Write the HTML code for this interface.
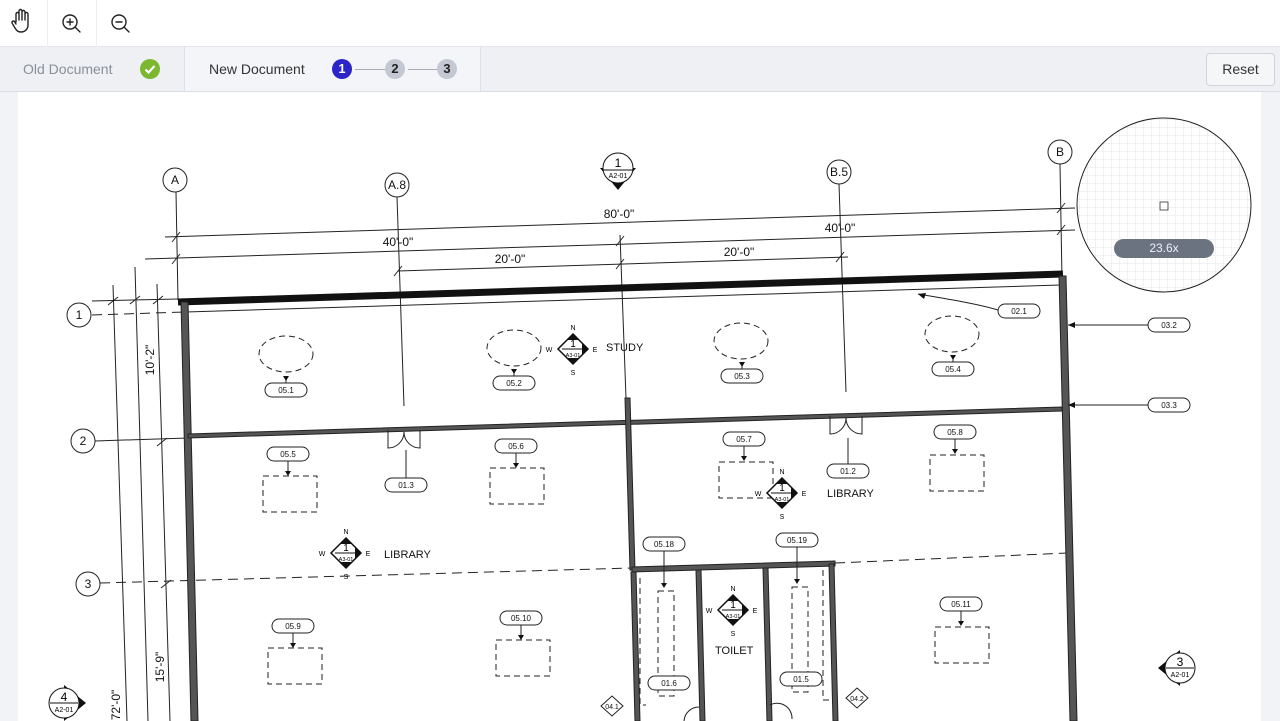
<!DOCTYPE html>
<html><head><meta charset="utf-8"><style>
*{margin:0;padding:0;box-sizing:border-box}
body{width:1280px;height:721px;overflow:hidden;background:#f1f3f6;font-family:"Liberation Sans",sans-serif;position:relative}
.top{position:absolute;left:0;top:0;width:1280px;height:47px;background:#fff;border-bottom:1px solid #e3e5ea}
.sep{position:absolute;top:0;width:1px;height:47px;background:#eceef2}
.tabs{position:absolute;left:0;top:47px;width:1280px;height:45px;background:#eef0f4;border-bottom:1px solid #d9dce2}
.t1{position:absolute;left:0;top:0;width:185px;height:44px;border-right:1px solid #dde0e6;color:#8a8f98;font-size:14px;line-height:44px;padding-left:23px}
.t2{position:absolute;left:185px;top:0;width:296px;height:44px;background:#f4f5f8;border-right:1px solid #dde0e6;color:#333;font-size:14px;line-height:44px;padding-left:24px}
.step{position:absolute;top:12px;width:20px;height:20px;border-radius:50%;font-size:13px;font-weight:bold;line-height:20px;text-align:center}
.reset{position:absolute;left:1206px;top:6px;width:69px;height:33px;border:1px solid #cfd3da;border-radius:4px;background:#f5f6f8;font-size:14px;line-height:31px;text-align:center;color:#333}
.page{position:absolute;left:18px;top:92px;width:1243px;height:629px;background:#fff}
svg text{font-family:"Liberation Sans",sans-serif}
</style></head><body>
<div class="top">
<svg width="140" height="47" style="position:absolute;left:0;top:0" fill="none" stroke="#222" stroke-width="1.4" stroke-linecap="round">
<path d="M16 22 V14 a1.5 1.5 0 0 1 3 0 V20 M19 13 V11 a1.5 1.5 0 0 1 3 0 V20 M22 12 a1.5 1.5 0 0 1 3 0 V20 M25 14 a1.5 1.5 0 0 1 3 0 V25 c0 4 -3 7 -7 7 c-3 0 -4 -1 -6 -4 l-3 -5 a1.5 1.5 0 0 1 2.5 -1.5 L16 24"/>
<circle cx="70" cy="22" r="7"/><path d="M75 27 l5 5 M70 19 v6 M67 22 h6"/>
<circle cx="119" cy="22" r="7"/><path d="M124 27 l5 5 M116 22 h6"/>
</svg>
<div class="sep" style="left:47px"></div><div class="sep" style="left:96px"></div>
</div>
<div class="tabs">
<div class="t1">Old Document<svg width="20" height="20" style="position:absolute;left:140px;top:12px;display:block"><circle cx="10" cy="10" r="10" fill="#7cb82f"/><path d="M5.5 10.5 l3 3 l6-6.5" stroke="#fff" stroke-width="2.2" fill="none"/></svg></div>
<div class="t2">New Document
<div class="step" style="left:147px;background:#2b24c9;color:#fff">1</div>
<div style="position:absolute;left:170px;top:22px;width:30px;height:1px;background:#aab"></div>
<div class="step" style="left:200px;background:#c3c8d2;color:#222">2</div>
<div style="position:absolute;left:223px;top:22px;width:30px;height:1px;background:#aab"></div>
<div class="step" style="left:252px;background:#c3c8d2;color:#222">3</div>
</div>
<div class="reset">Reset</div>
</div>
<div class="page"></div>
<svg width="1280" height="721" style="position:absolute;left:0;top:0" font-size="11">
<defs>
<pattern id="g" width="8" height="8" patternUnits="userSpaceOnUse"><path d="M8 0V8H0" fill="none" stroke="#e2e4e8" stroke-width="1"/></pattern>
<g id="cmp"><polygon points="0,-15 15,0 0,15 -15,0" fill="#fff" stroke="#111" stroke-width="1.5"/><polygon points="-6,-9 0,-15 6,-9" fill="#111"/><polygon points="-6,9 0,15 6,9" fill="#111"/><polygon points="9,-6 15,0 9,6" fill="#111"/><line x1="-11" y1="0" x2="11" y2="0" stroke="#111"/><text x="0" y="-2" font-size="10" text-anchor="middle">1</text><text x="0" y="8" font-size="5.5" text-anchor="middle">A3-01</text><text x="0" y="-19" font-size="7" text-anchor="middle">N</text><text x="0" y="26" font-size="7" text-anchor="middle">S</text><text x="-24" y="3" font-size="7" text-anchor="middle">W</text><text x="22" y="3" font-size="7" text-anchor="middle">E</text></g>
</defs>
<g stroke="#222" stroke-width="1" fill="none">
<line x1="176" y1="192" x2="178" y2="300"/><line x1="397" y1="197" x2="404" y2="406"/><line x1="839" y1="184" x2="846" y2="392"/><line x1="1060" y1="164" x2="1062" y2="280"/><line x1="620" y1="235" x2="626" y2="398"/>
<line x1="165" y1="237" x2="1075" y2="208"/><line x1="145" y1="259" x2="1075" y2="230"/><line x1="398" y1="271" x2="848" y2="257"/>
<path d="M172 242l8-10M1057 213l8-10M172 264l8-10M616 246l8-10M1057 235l8-10M394 276l8-10M616 269l8-10M836 262l8-10"/>
<line x1="113" y1="285" x2="127" y2="721"/><line x1="135" y1="267" x2="148" y2="721"/><line x1="157" y1="284" x2="170" y2="721"/><line x1="92" y1="301" x2="178" y2="299"/>
<path d="M108 305l10-8M130 304l10-8M153 304l10-8M157 446l10-8M161 588l10-8"/>
<line x1="95" y1="441" x2="188" y2="438"/>
<line x1="92" y1="315" x2="185" y2="312" stroke-dasharray="10,6"/>
<line x1="100" y1="583" x2="632" y2="568" stroke-dasharray="10,6"/>
<line x1="835" y1="563" x2="1068" y2="553" stroke-dasharray="10,6"/>
<circle cx="175" cy="180" r="12"/><circle cx="397" cy="185" r="12"/><circle cx="839" cy="172" r="12"/><circle cx="1060" cy="152" r="12"/>
<circle cx="79" cy="315" r="12"/><circle cx="83" cy="441" r="12"/><circle cx="88" cy="584" r="12"/>
</g>
<g font-size="12" text-anchor="middle" fill="#111">
<text x="175" y="184">A</text><text x="397" y="189">A.8</text><text x="839" y="176">B.5</text><text x="1060" y="156">B</text>
<text x="79" y="319">1</text><text x="83" y="445">2</text><text x="88" y="588">3</text>
<text x="619" y="218">80'-0"</text><text x="398" y="246">40'-0"</text><text x="840" y="232">40'-0"</text><text x="510" y="263">20'-0"</text><text x="739" y="256">20'-0"</text>
<text transform="translate(154,360) rotate(-90)">10'-2"</text><text transform="translate(164,667) rotate(-90)">15'-9"</text><text transform="translate(120,705) rotate(-90)">72'-0"</text>
</g>
<g stroke="#222">
<line x1="178" y1="302" x2="1063" y2="274" stroke-width="7" stroke="#111"/>
<line x1="186" y1="312" x2="1060" y2="285" stroke-width="1"/>
<polygon points="181,302 188,302 198,721 191,721" fill="#555" stroke-width="1"/>
<polygon points="1059,276 1066,276 1077,721 1070,721" fill="#555" stroke-width="1"/>
<polygon points="188,434 1062,407 1062,411 188,438" fill="#555" stroke-width="1"/>
<polygon points="625,398 630,398 635,570 630,570" fill="#555" stroke-width="1"/>
<polygon points="632,567 835,561 835,566 632,572" fill="#555" stroke-width="1"/>
<polygon points="631,572 636,572 640,721 635,721" fill="#555" stroke-width="1"/>
<polygon points="696,570 701,570 705,721 700,721" fill="#555" stroke-width="1"/>
<polygon points="763,568 768,568 772,721 767,721" fill="#555" stroke-width="1"/>
<polygon points="829,564 834,564 838,721 833,721" fill="#555" stroke-width="1"/>
</g>
<g fill="none" stroke="#222" stroke-dasharray="6,4">
<ellipse cx="286" cy="354" rx="27" ry="18"/><ellipse cx="514" cy="348" rx="27" ry="18"/><ellipse cx="741" cy="341" rx="27" ry="18"/><ellipse cx="952" cy="334" rx="27" ry="18"/>
<rect x="263" y="476" width="54" height="36"/><rect x="490" y="468" width="54" height="36"/><rect x="719" y="462" width="54" height="36"/><rect x="930" y="455" width="54" height="36"/>
<rect x="268" y="648" width="54" height="36"/><rect x="496" y="640" width="54" height="36"/><rect x="935" y="627" width="54" height="36"/>
<rect x="658" y="591" width="16" height="105"/><rect x="792" y="587" width="16" height="105"/>
<path d="M640 578V705H646M823 570V700H830"/>
</g>
<g fill="none" stroke="#222">
<path d="M388 430v18a16 16 0 0 0 16-16a16 16 0 0 0 16 16v-18M830 416v18a16 16 0 0 0 16-16a16 16 0 0 0 16 16v-18"/>
<path d="M918 294c30 5 60 10 80 16"/><path d="M1068 325h100M1068 405h100"/>
<path d="M684 721a15 15 0 0 1 15-14M770 705a15 15 0 0 1 22 14"/>
</g>
<g fill="#111"><polygon points="918,294 926,293 924,299"/><polygon points="1068,325 1075,322 1075,328"/><polygon points="1068,405 1075,402 1075,408"/></g>
<g stroke="#222" fill="none">
<path d="M286 383v-7M514 376v-7M742 369v-7M953 362v-7M288 461v10M516 453v10M744 446v10M955 439v10M293 633v10M521 625v10M961 611v10M664 551v35M797 547v35M406 478v-28M848 464v-26"/>
</g>
<g fill="#111">
<polygon points="283,376 289,376 286,381"/><polygon points="511,369 517,369 514,374"/><polygon points="739,362 745,362 742,367"/><polygon points="950,355 956,355 953,360"/>
<polygon points="285,471 291,471 288,476"/><polygon points="513,463 519,463 516,468"/><polygon points="741,456 747,456 744,461"/><polygon points="952,449 958,449 955,454"/>
<polygon points="290,643 296,643 293,648"/><polygon points="518,635 524,635 521,640"/><polygon points="958,621 964,621 961,626"/>
<polygon points="661,583 667,583 664,588"/><polygon points="794,579 800,579 797,584"/>
</g>
<g font-size="8" text-anchor="middle">
<g fill="#fff" stroke="#222">
<rect x="265" y="383" width="42" height="14" rx="7"/><rect x="493" y="376" width="42" height="14" rx="7"/><rect x="721" y="369" width="42" height="14" rx="7"/><rect x="932" y="362" width="42" height="14" rx="7"/>
<rect x="267" y="447" width="42" height="14" rx="7"/><rect x="495" y="439" width="42" height="14" rx="7"/><rect x="723" y="432" width="42" height="14" rx="7"/><rect x="934" y="425" width="42" height="14" rx="7"/>
<rect x="385" y="478" width="42" height="14" rx="7"/><rect x="827" y="464" width="42" height="14" rx="7"/>
<rect x="272" y="619" width="42" height="14" rx="7"/><rect x="500" y="611" width="42" height="14" rx="7"/><rect x="940" y="597" width="42" height="14" rx="7"/>
<rect x="643" y="537" width="42" height="14" rx="7"/><rect x="776" y="533" width="42" height="14" rx="7"/>
<rect x="648" y="676" width="42" height="14" rx="7"/><rect x="780" y="672" width="42" height="14" rx="7"/>
<rect x="998" y="304" width="42" height="14" rx="7"/><rect x="1148" y="318" width="42" height="14" rx="7"/><rect x="1148" y="398" width="42" height="14" rx="7"/>
<polygon points="612,696 623,706 612,716 601,706"/><polygon points="857,688 868,698 857,708 846,698"/>
</g>
<g fill="#111">
<text x="286" y="393">05.1</text><text x="514" y="386">05.2</text><text x="742" y="379">05.3</text><text x="953" y="372">05.4</text>
<text x="288" y="457">05.5</text><text x="516" y="449">05.6</text><text x="744" y="442">05.7</text><text x="955" y="435">05.8</text>
<text x="406" y="488">01.3</text><text x="848" y="474">01.2</text>
<text x="293" y="629">05.9</text><text x="521" y="621">05.10</text><text x="961" y="607">05.11</text>
<text x="664" y="547">05.18</text><text x="797" y="543">05.19</text><text x="669" y="686">01.6</text><text x="801" y="682">01.5</text>
<text x="1019" y="314">02.1</text><text x="1169" y="328">03.2</text><text x="1169" y="408">03.3</text>
<text x="612" y="709" font-size="7">04.1</text><text x="857" y="701" font-size="7">04.2</text>
</g></g>
<use href="#cmp" x="573" y="349"/><use href="#cmp" x="782" y="493"/><use href="#cmp" x="346" y="553"/><use href="#cmp" x="733" y="610"/>
<g font-size="11" fill="#111"><text x="606" y="351">STUDY</text><text x="827" y="497">LIBRARY</text><text x="384" y="558">LIBRARY</text><text x="715" y="654">TOILET</text></g>
<g><polygon points="600,168 636,168 618,190" fill="#111"/><circle cx="618" cy="168" r="15" fill="#fff" stroke="#111"/><line x1="603" y1="170" x2="633" y2="170" stroke="#111"/><text x="618" y="167" font-size="12" text-anchor="middle">1</text><text x="618" y="178" font-size="7" text-anchor="middle">A2-01</text></g>
<g><polygon points="1180,650 1158,668 1180,686" fill="#111"/><circle cx="1180" cy="668" r="15" fill="#fff" stroke="#111"/><line x1="1166" y1="668" x2="1194" y2="668" stroke="#111"/><text x="1180" y="666" font-size="12" text-anchor="middle">3</text><text x="1180" y="677" font-size="7" text-anchor="middle">A2-01</text></g>
<g><polygon points="64,685 86,703 64,721" fill="#111"/><circle cx="64" cy="703" r="15" fill="#fff" stroke="#111"/><line x1="50" y1="703" x2="78" y2="703" stroke="#111"/><text x="64" y="701" font-size="12" text-anchor="middle">4</text><text x="64" y="712" font-size="7" text-anchor="middle">A2-01</text></g>
<circle cx="1164" cy="205" r="87" fill="#fff"/><circle cx="1164" cy="205" r="87" fill="url(#g)" stroke="#222" stroke-width="1"/>
<rect x="1160" y="202" width="8" height="8" fill="none" stroke="#333" stroke-width="0.8"/>
<rect x="1114" y="239" width="100" height="19" rx="9.5" fill="#6b7280"/>
<text x="1164" y="252" fill="#eef" font-size="12" text-anchor="middle">23.6x</text>
</svg>
</body></html>
